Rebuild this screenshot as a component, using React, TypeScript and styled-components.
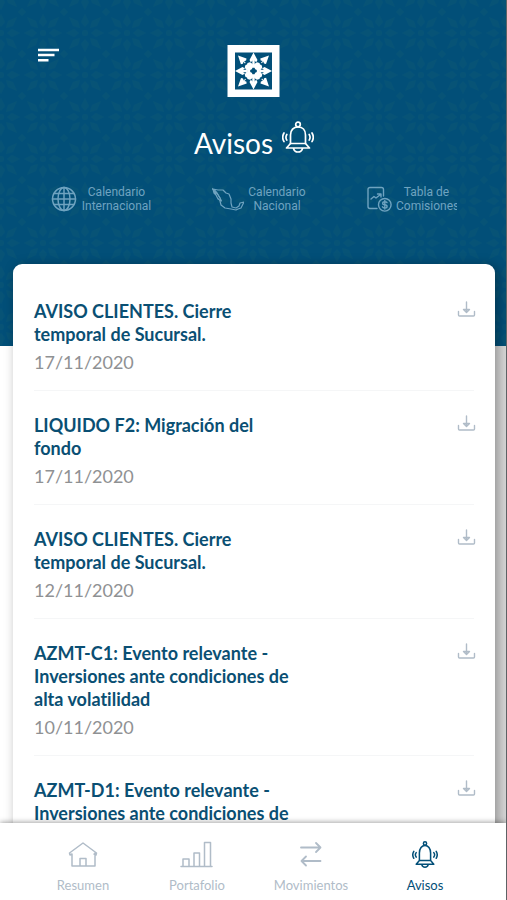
import React from "react";
import styled, { createGlobalStyle } from "styled-components";

const colors = {
  brand: "#024f78",
  title: "#0a4f73",
  muted: "#b0bcc8",
  date: "#8f9193",
  link: "#6fa3c0",
};

const tile = encodeURIComponent(
  `<svg xmlns="http://www.w3.org/2000/svg" width="42" height="42" viewBox="0 0 42 42"><g fill="#2c7468" fill-opacity=".11"><path d="M21 2l4 8-4 5-4-5zM21 40l4-8-4-5-4 5zM2 21l8-4 5 4-5 4zM40 21l-8-4-5 4 5 4zM5 5l9 4 2 7-7-2zM37 5l-9 4-2 7 7-2zM5 37l9-4 2-7-7 2zM37 37l-9-4-2-7 7 2z"/><circle cx="21" cy="21" r="3"/><path d="M0 0h4L0 4zM42 0h-4l4 4zM0 42h4l-4-4zM42 42h-4l4-4z"/></g></svg>`
);

const GlobalStyle = createGlobalStyle`
  * { box-sizing: border-box; }
  body {
    margin: 0;
    background: #fff;
    font-family: Lato, "Liberation Sans", sans-serif;
    font-variant-ligatures: none;
  }
  button { font: inherit; border: 0; padding: 0; background: none; cursor: pointer; }
  a { color: inherit; text-decoration: none; }
`;

const Page = styled.div`
  display: flex;
  flex-direction: column;
  height: 100vh;
  overflow: hidden;
  border-right: 1px solid #5d6265;
`;

const Content = styled.main`
  flex: 1;
  min-height: 0;
  overflow-y: auto;
  scrollbar-width: none;
  background: linear-gradient(to right, #fff 50%, #d8d8d8 50%);
`;

const Hero = styled.header`
  display: flex;
  flex-direction: column;
  padding: 45px 0 133px;
  background: ${colors.brand} url("data:image/svg+xml,${tile}") 22px 12px;
`;

const TopBar = styled.div`
  display: grid;
  grid-template-columns: 1fr auto 1fr;
  align-items: start;
  padding: 0 35px 0 36px;
`;

const MenuButton = styled.button`
  justify-self: start;
  height: 20px;
  color: #fff;
`;

const Heading = styled.h1`
  display: flex;
  align-items: flex-start;
  justify-content: center;
  gap: 9px;
  margin: 23px 0 0;
  padding-left: 2px;
  color: #fff;
  font-size: 28px;
  font-weight: 400;
  line-height: 44px;
`;

const QuickLinks = styled.nav`
  display: flex;
  justify-content: space-between;
  margin-top: 20px;
  padding: 0 49px 0 51px;
  color: ${colors.link};
`;

const QuickLink = styled.a`
  display: flex;
  align-items: center;
  gap: 4px;
`;

const QuickLabel = styled.span<{ $width: number }>`
  width: ${(p) => p.$width}px;
  overflow: hidden;
  font-family: Roboto, sans-serif;
  font-size: 12px;
  font-weight: 400;
  line-height: 14px;
  text-align: center;
`;

const Card = styled.ul`
  position: relative;
  margin: -82px 11px 0 13px;
  padding: 13px 21px 0;
  list-style: none;
  background: #fff;
  border-radius: 9px;
  box-shadow: 3px 2px 12px rgba(0, 0, 0, 0.34);
`;

const Notice = styled.li`
  display: flex;
  justify-content: space-between;
  align-items: flex-start;
  padding: 23px 0 15px;
  border-bottom: 1px solid #f5f6f7;
`;

const NoticeTitle = styled.h2`
  max-width: 270px;
  margin: 0;
  color: ${colors.title};
  font-size: 18px;
  font-weight: 700;
  line-height: 23px;
`;

const NoticeDate = styled.time`
  display: block;
  margin-top: 4px;
  padding-bottom: 1px;
  color: ${colors.date};
  font-size: 18px;
  line-height: 24px;
`;

const DownloadButton = styled.button`
  height: 20px;
  margin-right: -3px;
  color: ${colors.muted};
`;

const TabBar = styled.nav`
  position: relative;
  display: grid;
  grid-template-columns: repeat(4, 1fr);
  padding: 16px 24px 6px 26px;
  background: #fff;
  box-shadow: 0 -1px 5px rgba(0, 0, 0, 0.35);
`;

const Tab = styled.a<{ $active?: boolean }>`
  display: flex;
  flex-direction: column;
  align-items: center;
  gap: 5px;
  color: ${(p) => (p.$active ? colors.brand : colors.muted)};
  font-size: 13px;
  line-height: 18px;
`;

const Icon = styled.svg`
  display: block;
  flex: none;
  fill: none;
  stroke: currentColor;
  stroke-linecap: round;
  stroke-linejoin: round;
`;

function MenuIcon() {
  return (
    <Icon width="24" height="20" viewBox="0 0 24 20">
      <path strokeLinecap="butt" strokeWidth="2.6" d="M2 5h21M2 10h16.500M2 15.200h10.500" />
    </Icon>
  );
}

function Logo() {
  return (
    <svg width="53" height="53" viewBox="0 0 53 53" role="img" aria-label="Inicio">
      <path fill="#fff" d="M.5 0h52v52H.5z" />
      <path fill={colors.brand} d="M8 7.500h37v37H8z" />
      <g transform="translate(26.500 26)" fill="#fff">
        {[0, 90, 180, 270].map((a) => (
          <g key={a} transform={`rotate(${a})`}>
            <path d="M0-18.500L4-11 2.600-8.500 1.200-10.500V-6h-2.400v-4.500L-2.600-8.500-4-11z" />
            <path d="M15.500-15.500L12.500-7 10.500-7.400 9.800-9.400 8.300-7.800 7.500-8.600 9.200-10 7.200-10.600 6.800-12.600z" />
          </g>
        ))}
        <path d="M-1.500-7.500L0-6 1.500-7.500 3.500-8.800 6-8 6.500-6.500 8-6 8.800-3.500 7.500-1.500 6 0 7.500 1.500 8.800 3.500 8 6 6.500 6.500 6 8 3.500 8.800 1.500 7.500 0 6-1.500 7.500-3.500 8.800-6 8-6.500 6.500-8 6-8.800 3.500-7.500 1.500-6 0-7.500-1.500-8.800-3.500-8-6-6.500-6.500-6-8-3.500-8.800z" />
        <path fill={colors.brand} d="M-1-3.300h2l.7 1.600 1.600.7v2l-1.600.7-.7 1.600h-2l-.7-1.600-1.600-.7v-2l1.600-.7z" />
      </g>
    </svg>
  );
}

function BellIcon() {
  return (
    <Icon width="32" height="32" viewBox="0 0 32 32" strokeWidth="1.700">
      <circle cx="16" cy="3.500" r="2.300" />
      <path d="M8.500 22.500V14C8.500 9 11.500 6 16 6s7.500 3 7.500 8v8.500" />
      <path d="M8.500 22.500h15l4 4.500h-23zM11.500 27.500c.6 2.400 2.200 3.500 4.500 3.500s3.900-1.100 4.500-3.500" />
      <path d="M4.800 13.500c-1 1.600-1 4 0 5.600M2 12c-1.600 2.700-1.600 6 0 8.600M27.200 13.500c1 1.600 1 4 0 5.600M30 12c1.600 2.700 1.600 6 0 8.600" />
    </Icon>
  );
}

function GlobeIcon() {
  return (
    <Icon width="26" height="28" viewBox="0 0 26 28" strokeWidth="1.500">
      <circle cx="13" cy="14" r="11.500" />
      <ellipse cx="13" cy="14" rx="6" ry="11.500" />
      <path d="M13 2.500v23M1.500 14h23M3 8.500h20M3 19.500h20" />
    </Icon>
  );
}

function MexicoIcon() {
  return (
    <Icon width="32" height="28" viewBox="0 0 32 28" strokeWidth="1.200">
      <path d="M1 4l5 1h5l3 3 3 1 2 5v4l1 4 4 1 3-2 1-3 4-1-3 6-3 1-2 1-5-1-6-1-4-3-1-4-3-4-3-6-2-2.500L5.500 9l2.500 4 1.500 3-3.500-2-2-4-2-2z" />
      <path d="M2.500 5l2.500 3 3 5" />
    </Icon>
  );
}

function FeesIcon() {
  return (
    <Icon width="26" height="28" viewBox="0 0 26 28" strokeWidth="1.400">
      <path d="M11 23.500H4a2 2 0 0 1-2-2v-17a2 2 0 0 1 2-2h11.500a2 2 0 0 1 2 2V11" />
      <path d="M5 14l3-2.500 2 1.500 4.500-3.500M11.500 9H15v3" />
      <circle cx="18.800" cy="19.800" r="6.300" />
      <path d="M21 17.700c-.4-.7-1.200-1-2.200-1-2.800 0-2.800 3 0 3.100 3 .1 3 3.200 0 3.200-1.200 0-2-.4-2.400-1.200M18.800 15.500v8.600" />
    </Icon>
  );
}

function DownloadIcon() {
  return (
    <Icon width="20" height="20" viewBox="0 0 20 20" strokeWidth="1.400">
      <path d="M1.500 11.500V15q0 1 1 1h14q1 0 1-1v-3.500M9.500 2v9.500M6.500 9.500l3 3 3-3z" />
    </Icon>
  );
}

function HomeIcon() {
  return (
    <Icon width="30" height="32" viewBox="0 0 30 32" strokeWidth="1.500">
      <path d="M4 15l-2 1-.5-2L15 4l13.500 10-.5 2-2-1M4 15v12h23V14M12 27v-7.500h6V27" />
    </Icon>
  );
}

function BarsIcon() {
  return (
    <Icon width="34" height="32" viewBox="0 0 34 32" strokeWidth="1.500">
      <path d="M1 27.500h31M3 27.500V20h6v7.500M14 27.500V14h5.500v13.500M24.500 27.500v-24h6v24" />
    </Icon>
  );
}

function TransferIcon() {
  return (
    <Icon width="26" height="32" viewBox="0 0 26 32" strokeWidth="1.800">
      <path d="M3 8.500h19.500M18 4l4.500 4.500L18 13M22.500 22H3.500M8 17.500L3.500 22 8 26.500" />
    </Icon>
  );
}

function BellTabIcon() {
  return (
    <Icon width="26" height="32" viewBox="0 -4 32 40" strokeWidth="1.900">
      <circle cx="16" cy="1.500" r="2" />
      <path d="M9 23v-9.500C9 8 12 4 16 4s7 4 7 9.500V23M9 23h14l4 4.500H5zM12 28c.5 2.300 2 3.200 4 3.200s3.500-.9 4-3.200" />
      <path d="M5 13c-1.200 1.600-1.200 4 0 5.600M2 11.500c-1.600 2.700-1.600 6 0 8.600M27 13c1.200 1.600 1.200 4 0 5.600M30 11.500c1.600 2.700 1.600 6 0 8.600" />
    </Icon>
  );
}

const quickLinks = [
  { icon: <GlobeIcon />, lines: ["Calendario", "Internacional"], width: 71 },
  { icon: <MexicoIcon />, lines: ["Calendario", "Nacional"], width: 58 },
  { icon: <FeesIcon />, lines: ["Tabla de", "Comisiones"], width: 61 },
];

const notices = [
  { title: "AVISO CLIENTES. Cierre temporal de Sucursal.", date: "17/11/2020" },
  { title: "LIQUIDO F2: Migración del fondo", date: "17/11/2020" },
  { title: "AVISO CLIENTES. Cierre temporal de Sucursal.", date: "12/11/2020" },
  { title: "AZMT-C1: Evento relevante - Inversiones ante condiciones de alta volatilidad", date: "10/11/2020" },
  { title: "AZMT-D1: Evento relevante - Inversiones ante condiciones de alta volatilidad", date: "10/11/2020" },
];

const tabs = [
  { label: "Resumen", icon: <HomeIcon /> },
  { label: "Portafolio", icon: <BarsIcon /> },
  { label: "Movimientos", icon: <TransferIcon /> },
  { label: "Avisos", icon: <BellTabIcon />, active: true },
];

export default function App() {
  return (
    <>
      <GlobalStyle />
      <Page>
        <Content>
          <Hero>
            <TopBar>
              <MenuButton aria-label="Menú">
                <MenuIcon />
              </MenuButton>
              <Logo />
            </TopBar>
            <Heading>
              Avisos
              <BellIcon />
            </Heading>
            <QuickLinks>
              {quickLinks.map((link) => (
                <QuickLink href="#" key={link.lines.join(" ")}>
                  {link.icon}
                  <QuickLabel $width={link.width}>
                    {link.lines[0]}
                    <br />
                    {link.lines[1]}
                  </QuickLabel>
                </QuickLink>
              ))}
            </QuickLinks>
          </Hero>
          <Card>
            {notices.map((notice, i) => (
              <Notice key={i}>
                <div>
                  <NoticeTitle>{notice.title}</NoticeTitle>
                  <NoticeDate>{notice.date}</NoticeDate>
                </div>
                <DownloadButton aria-label={`Descargar ${notice.title}`}>
                  <DownloadIcon />
                </DownloadButton>
              </Notice>
            ))}
          </Card>
        </Content>
        <TabBar>
          {tabs.map((tab) => (
            <Tab href="#" key={tab.label} $active={tab.active} aria-current={tab.active ? "page" : undefined}>
              {tab.icon}
              {tab.label}
            </Tab>
          ))}
        </TabBar>
      </Page>
    </>
  );
}
